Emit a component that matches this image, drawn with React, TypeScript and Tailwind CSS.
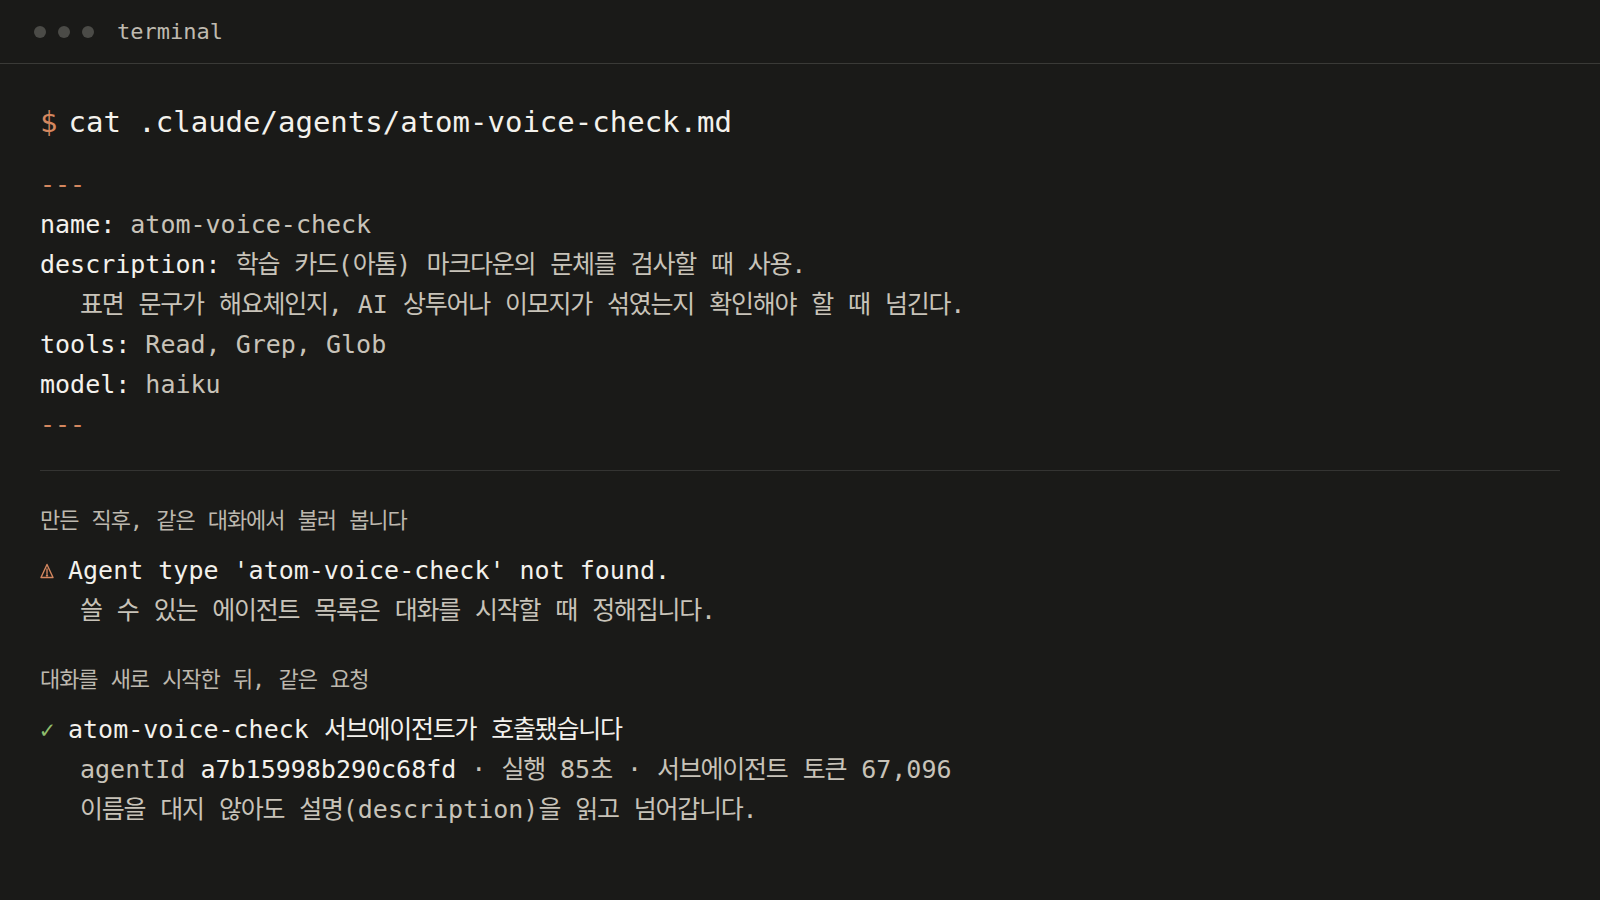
import React from "react";

// Hangul glyphs in the reference are a touch narrower than Noto's
const K = ({ t }: { t: string }) => (
  <>
    {t.split(/([\uAC00-\uD7A3]+)/).map((s, i) =>
      i % 2 ? (
        <span key={i} className="tracking-[-0.05em]">
          {s}
        </span>
      ) : (
        <React.Fragment key={i}>{s}</React.Fragment>
      )
    )}
  </>
);

const Line = ({ children, className = "" }: { children: React.ReactNode; className?: string }) => (
  <div className={`h-10 leading-10 whitespace-pre ${className}`}>{children}</div>
);

export default function App() {
  return (
    <div className="min-h-screen bg-[#1a1a18] font-['DejaVu_Sans_Mono','Noto_Sans_CJK_KR',monospace] text-[#f3f1ec]">
      {/* title bar */}
      <div className="flex h-[64px] items-center border-b border-[#3a3a37] pl-[34px]">
        <div className="flex gap-3">
          <span className="h-3 w-3 rounded-full bg-[#4b4b47]" />
          <span className="h-3 w-3 rounded-full bg-[#4b4b47]" />
          <span className="h-3 w-3 rounded-full bg-[#4b4b47]" />
        </div>
        <span className="ml-[23px] text-[22px] text-[#bfbab0]">terminal</span>
      </div>

      <div className="px-10 pt-[38px]">
        <div className="flex h-10 items-center text-[29px] leading-10">
          <span className="mr-[11px] text-[#d4875f]">$</span>
          <span>cat .claude/agents/atom-voice-check.md</span>
        </div>

        <div className="mt-[23px] text-[25px]">
          <Line className="text-[#d4875f]">---</Line>
          <Line>
            name: <span className="text-[#c8c3b9]">atom-voice-check</span>
          </Line>
          <Line>
            description:{" "}
            <span className="text-[#c8c3b9]">
              <K t="학습 카드(아톰) 마크다운의 문체를 검사할 때 사용." />
            </span>
          </Line>
          <Line className="pl-10 text-[#c8c3b9]">
            <K t="표면 문구가 해요체인지, AI 상투어나 이모지가 섞였는지 확인해야 할 때 넘긴다." />
          </Line>
          <Line>
            tools: <span className="text-[#c8c3b9]">Read, Grep, Glob</span>
          </Line>
          <Line>
            model: <span className="text-[#c8c3b9]">haiku</span>
          </Line>
          <Line className="text-[#d4875f]">---</Line>
        </div>

        <div className="mt-[25px] border-t border-[#343432]" />

        <div className="pt-[34px] text-[22px] leading-8 text-[#bdb8ae]">
          <K t="만든 직후, 같은 대화에서 불러 봅니다" />
        </div>

        <div className="mt-3.5 text-[25px]">
          <Line className="flex items-center">
            <span className="flex w-[28px] items-center">
              <svg width="14" height="16" viewBox="0 0 14 16" fill="none" stroke="#d4875f" strokeWidth="1.4" strokeLinejoin="round">
                <path d="M7 1.5 L13 14.5 H1 Z" />
                <path d="M7 6 V10.5" strokeLinecap="round" />
                <circle cx="7" cy="12.4" r="0.5" fill="#d4875f" />
              </svg>
            </span>
            <span>Agent type 'atom-voice-check' not found.</span>
          </Line>
          <Line className="pl-10 text-[#c8c3b9]">
            <K t="쓸 수 있는 에이전트 목록은 대화를 시작할 때 정해집니다." />
          </Line>
        </div>

        <div className="mt-[33px] text-[22px] leading-8 text-[#bdb8ae]">
          <K t="대화를 새로 시작한 뒤, 같은 요청" />
        </div>

        <div className="mt-3.5 text-[25px]">
          <Line className="flex">
            <span className="w-[28px] text-[24px] text-[#8fbd6d]">✓</span>
            <span>
              <K t="atom-voice-check 서브에이전트가 호출됐습니다" />
            </span>
          </Line>
          <Line className="pl-10 text-[#c8c3b9]">
            agentId <span className="text-[#f3f1ec]">a7b15998b290c68fd</span>{" "}
            <K t="· 실행 85초 · 서브에이전트 토큰 67,096" />
          </Line>
          <Line className="pl-10 text-[#c8c3b9]">
            <K t="이름을 대지 않아도 설명(description)을 읽고 넘어갑니다." />
          </Line>
        </div>
      </div>
    </div>
  );
}
